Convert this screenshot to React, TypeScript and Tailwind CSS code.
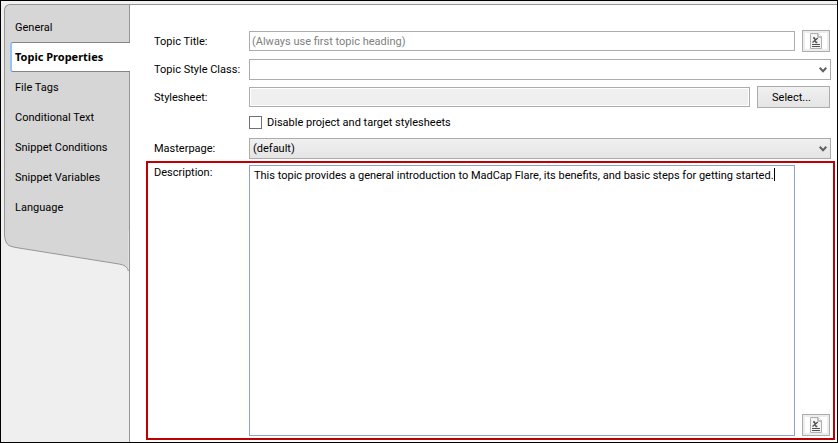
import type { ReactNode } from "react";

const tabs = [
  "General",
  "Topic Properties",
  "File Tags",
  "Conditional Text",
  "Snippet Conditions",
  "Snippet Variables",
  "Language",
];

const activeTab = "Topic Properties";

function Sidebar() {
  return (
    <aside className="flex w-[126px] shrink-0 flex-col bg-[#efefef]">
      <nav className="rounded-tl-md border-t border-r border-l border-[#969696] bg-[#d6d6d6] pt-[7px] pb-[9px]">
        {tabs.map((tab) =>
          tab === activeTab ? (
            <button
              key={tab}
              type="button"
              aria-current="page"
              className="-mr-px ml-[5px] flex h-[30px] w-[120px] items-center rounded-l-[3px] border-y border-l-2 border-y-[#858585] border-l-[#8fc4fb] bg-white pl-[3px] text-left font-['Noto_Sans',sans-serif] leading-[14px] font-bold whitespace-nowrap"
            >
              {tab}
            </button>
          ) : (
            <button
              key={tab}
              type="button"
              className="flex h-[30px] w-full items-center pl-[10px] text-left whitespace-nowrap"
            >
              {tab}
            </button>
          ),
        )}
      </nav>
      <div className="flex-1 border-r border-[#969696]">
        <svg viewBox="0 0 125 40" className="block h-[40px] w-[125px]" aria-hidden="true">
          <path d="M0 0V4Q1 12 5 14.500Q8 16 15 17L115 33Q123 34 124.500 40V0Z" fill="#d6d6d6" />
          <path d="M.5 0V4Q1 12 5 14.500Q8 16 15 17L115 33Q123 34 124.500 40" fill="none" stroke="#969696" />
        </svg>
      </div>
    </aside>
  );
}

function DocumentButton({ label }: { label: string }) {
  return (
    <button
      type="button"
      aria-label={label}
      className="flex h-[22px] w-[28px] shrink-0 items-center justify-center border border-[#acacac] bg-[#ededed]"
    >
      <svg width="22" height="16" viewBox="0 0 22 16" aria-hidden="true">
        <path d="M0 0H22V16H0Z" fill="#fff" />
        <path d="M5.500 .5H13L16.500 4V15.500H5.500Z" fill="#f4f4f4" stroke="#b0b0b0" />
        <path d="M13 .5V4H16.500" fill="#fff" stroke="#8c8c8c" />
        <path d="M8 5H9.500L11 9.500H12.300M12.800 5L7.500 9.500" fill="none" stroke="#505050" strokeWidth="1.300" />
        <path d="M7 11.500H15M7 13.500H15" stroke="#505050" />
      </svg>
    </button>
  );
}

function Label({ htmlFor, children }: { htmlFor: string; children: ReactNode }) {
  return (
    <label htmlFor={htmlFor} className="w-[95px] shrink-0 whitespace-nowrap">
      {children}
    </label>
  );
}

function Select({ id, value, className }: { id: string; value: string; className: string }) {
  return (
    <div className="relative min-w-0 flex-1">
      <select
        id={id}
        className={`block h-[21px] w-full appearance-none border border-[#acacac] pl-[3px] ${className}`}
      >
        <option>{value}</option>
      </select>
      <svg
        width="8"
        height="6"
        viewBox="0 0 8 6"
        className="pointer-events-none absolute top-[8px] right-[4px]"
        aria-hidden="true"
      >
        <path d="M.7 .8L4 4.200L7.300 .8" fill="none" stroke="#606060" strokeWidth="2" />
      </svg>
    </div>
  );
}

export default function App() {
  return (
    <div className="flex min-h-screen border border-black bg-[#f4f1f4] pt-[3px] font-[Roboto,sans-serif] text-[11px] leading-[15px] text-black">
      <div className="w-[3px] shrink-0 bg-[#efefef]" />
      <Sidebar />
      <main className="flex min-w-0 flex-1 flex-col border-t border-[#969696] bg-white pt-[25px] pr-[2px] pb-[2px] pl-[16px]">
        <div className="flex items-center pr-[5px] pl-[8px]">
          <Label htmlFor="title">Topic Title:</Label>
          <input
            id="title"
            placeholder="(Always use first topic heading)"
            className="mr-[7px] h-[20px] min-w-0 flex-1 border border-[#acacac] bg-white pl-[2px] placeholder:text-[#808080]"
          />
          <DocumentButton label="Insert variable in title" />
        </div>
        <div className="mt-[7px] flex items-center pr-[4px] pl-[8px]">
          <Label htmlFor="style-class">Topic Style Class:</Label>
          <Select id="style-class" value="" className="bg-white" />
        </div>
        <div className="mt-[6px] flex items-center pr-[5px] pl-[8px]">
          <Label htmlFor="stylesheet">Stylesheet:</Label>
          <input
            id="stylesheet"
            readOnly
            className="mr-[7px] h-[20px] min-w-0 flex-1 border border-[#acacac] bg-[#efefef] ring-1 ring-white ring-inset"
          />
          <button
            type="button"
            className="h-[22px] w-[73px] border border-[#acacac] bg-linear-to-b from-[#f0f0f0] to-[#e5e5e5] pr-[4px]"
          >
            Select...
          </button>
        </div>
        <div className="mt-[8px] flex h-[13px] items-center pl-[103px]">
          <input
            id="disable"
            type="checkbox"
            className="h-[13px] w-[13px] appearance-none border border-[#707070] bg-white checked:bg-[#707070]"
          />
          <label htmlFor="disable" className="pl-[5px]">
            Disable project and target stylesheets
          </label>
        </div>
        <div className="mt-[9px] flex items-center pr-[4px] pl-[8px]">
          <Label htmlFor="masterpage">Masterpage:</Label>
          <Select
            id="masterpage"
            value="(default)"
            className="bg-linear-to-b from-[#f0f0f0] to-[#e5e5e5]"
          />
        </div>
        <section className="mt-[2px] flex flex-1 border-2 border-[#c00000] pt-[2px] pr-[3px] pb-[2px] pl-[6px]">
          <Label htmlFor="description">Description:</Label>
          <div className="relative mr-[7px] flex min-w-0 flex-1">
            <textarea
              id="description"
              defaultValue="This topic provides a general introduction to MadCap Flare, its benefits, and basic steps for getting started."
              className="block w-full resize-none border border-[#8aa3c6] bg-white px-[4px] py-[2px]"
            />
            <span className="absolute top-[3px] left-[525px] h-[13px] w-px bg-black" />
          </div>
          <div className="flex items-end">
            <DocumentButton label="Insert variable in description" />
          </div>
        </section>
      </main>
    </div>
  );
}
